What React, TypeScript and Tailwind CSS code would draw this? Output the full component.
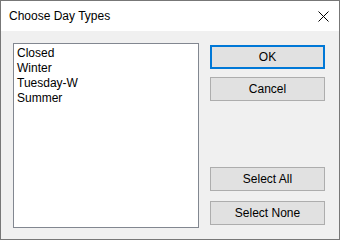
export default function App() {
  const btn =
    'w-[115px] h-[24px] flex items-center justify-center bg-[#e1e1e1] text-[12px] text-black'
  const grey = btn + ' border border-[#adadad]'

  return (
    <div className="w-[340px] h-[240px] border border-[#777777] flex flex-col font-['Liberation_Sans',sans-serif] text-black">
      <div className="h-[30px] bg-white flex items-center justify-between pl-[8px] pr-[10px]">
        <span className="text-[12px]">Choose Day Types</span>
        <svg width="11" height="11" viewBox="0 0 11 11" className="mt-[1px]">
          <path d="M0.5 0.5 L10.5 10.5 M10.5 0.5 L0.5 10.5" stroke="#000" strokeWidth="1" fill="none" />
        </svg>
      </div>
      <div className="flex-1 bg-[#f0f0f0] flex pl-[12px] pt-[12px]">
        <div className="w-[186px] h-[185px] bg-white border border-[#828790] pl-[3px] pt-[2px] text-[12px] leading-[15px]">
          <div>Closed</div>
          <div>Winter</div>
          <div>Tuesday-W</div>
          <div>Summer</div>
        </div>
        <div className="ml-[11px] mt-[2px] flex flex-col">
          <button className={btn + ' border-2 border-[#0078d7]'}>OK</button>
          <button className={grey + ' mt-[8px]'}>Cancel</button>
          <button className={grey + ' mt-[66px]'}>Select All</button>
          <button className={grey + ' mt-[10px]'}>Select None</button>
        </div>
      </div>
    </div>
  )
}
